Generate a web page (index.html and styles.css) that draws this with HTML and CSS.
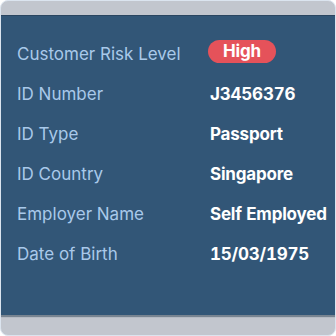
FILE: index.html
```html
<!DOCTYPE html>
<html>
<head>
<meta charset="utf-8">
<link rel="stylesheet" href="styles.css">
</head>
<body>
<div class="frame">
  <div class="panel">
    <div class="grid">
      <div class="label">Customer Risk Level</div>
      <div class="value"><span class="badge">High</span></div>
      <div class="label">ID Number</div>
      <div class="value">J3456376</div>
      <div class="label">ID Type</div>
      <div class="value">Passport</div>
      <div class="label">ID Country</div>
      <div class="value">Singapore</div>
      <div class="label">Employer Name</div>
      <div class="value">Self Employed</div>
      <div class="label">Date of Birth</div>
      <div class="value">15/03/1975</div>
    </div>
  </div>
</div>
</body>
</html>
```
FILE: styles.css
```css
html, body {
  margin: 0;
  padding: 0;
  background: #ffffff;
}
.frame {
  width: 336px;
  height: 336px;
  box-sizing: border-box;
  border-radius: 8px;
  border: 1px solid #dbe4ef;
  background: #c2c6ce;
  padding-top: 14px;
  overflow: hidden;
  font-family: Inter, "Liberation Sans", sans-serif;
}
.panel {
  height: 300px;
  background: #325677;
  border-top: 1px solid #2a4560;
  box-shadow: 0 2px 1px rgba(30, 50, 70, 0.45);
  padding-top: 18px;
  padding-left: 16px;
  box-sizing: border-box;
}
.grid {
  display: grid;
  grid-template-columns: 193px auto;
  grid-auto-rows: 40px;
  align-items: center;
  font-size: 17px;
  line-height: 40px;
}
.label {
  color: #a9c9ea;
  white-space: nowrap;
}
.value {
  color: #ffffff;
  font-weight: 700;
  white-space: nowrap;
  font-variant-numeric: tabular-nums;
  letter-spacing: -0.2px;
}
.badge {
  display: inline-block;
  background: #e5525a;
  color: #ffffff;
  height: 23px;
  line-height: 23px;
  padding: 0 15px;
  border-radius: 12px;
  vertical-align: middle;
  margin-left: -2px;
  position: relative;
  top: -4px;
}
```
